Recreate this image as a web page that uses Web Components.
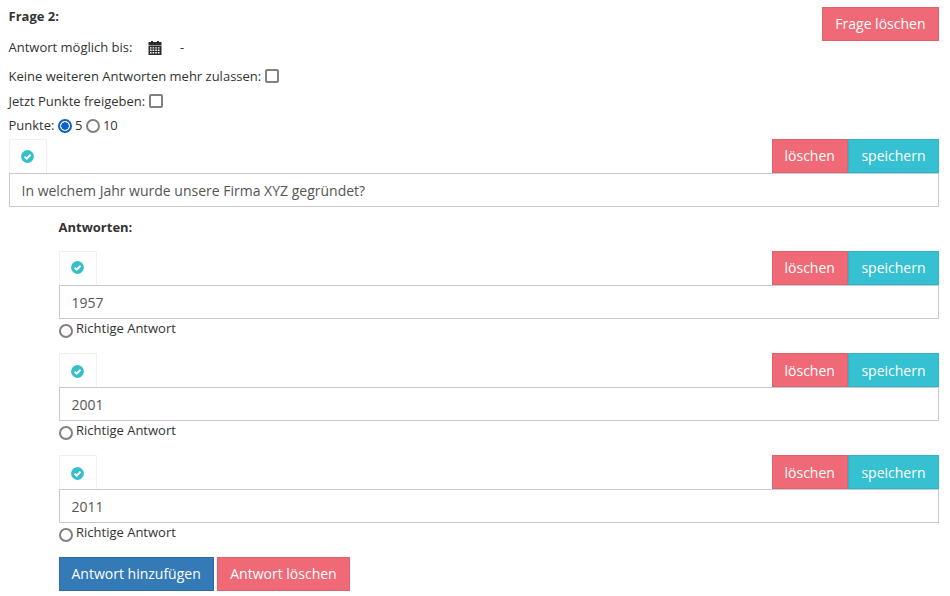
<!DOCTYPE html>
<html lang="de">
<head>
<meta charset="utf-8">
<title>Frage 2</title>
<style>
html, body { margin: 0; background: #fff; }
body { font: 13px/18px "Open Sans", sans-serif; color: #333; }
</style>
</head>
<body>
<quiz-question></quiz-question>
<script>
class QuizButton extends HTMLElement {
	constructor(){
		super();
		let shadowRoot = this.attachShadow({mode: 'open'});
		shadowRoot.innerHTML = `
			<style>
			:host { display: inline-block; }
			button {
				display: block;
				box-sizing: border-box;
				height: 34px;
				margin: 0;
				padding: var(--ink-shift, 0) 12px 0;
				border: 1px solid #e25f6b;
				border-radius: 0;
				background: #ef6a76;
				color: #fff;
				font: 14px/20px "Open Sans", sans-serif;
				white-space: nowrap;
			}
			:host([wide]) button { padding-left: 12.5px; padding-right: 12.5px; }
			:host([kind="save"]) button { background: #35c1d2; border-color: #2fb5c6; }
			:host([kind="primary"]) button { background: #337ab7; border-color: #2e6da4; }
			</style>
			<button type="button"><slot></slot></button>
		`;
	}
}
customElements.define('quiz-button', QuizButton);

class QuizEditor extends HTMLElement {
	constructor(){
		super();
		let shadowRoot = this.attachShadow({mode: 'open'});
		shadowRoot.innerHTML = `
			<style>
			:host { display: block; }
			.bar { display: flex; justify-content: space-between; height: 34px; }
			.tool {
				box-sizing: border-box;
				width: 38px;
				height: 34px;
				padding: var(--tool-pad, 10px) 1px 0 0;
				display: flex;
				align-items: flex-start;
				justify-content: center;
				border: 1px solid #f0f0f0;
				border-bottom: 0;
			}
			.actions { display: flex; }
			.field {
				box-sizing: border-box;
				height: 34px;
				padding: 0 12px;
				border: 1px solid #c7c9d3;
				font-size: 14px;
				line-height: 34px;
				color: #555;
			}
			svg { display: block; }
			</style>
			<div class="bar">
				<div class="tool">
					<svg width="13" height="13" viewBox="0 0 13 13">
						<circle cx="6.5" cy="6.5" r="6.4" fill="#35bfca"/>
						<path d="M3.5 6.6 5.7 8.7 9.6 4.8" fill="none" stroke="#fff" stroke-width="2"/>
					</svg>
				</div>
				<div class="actions">
					<quiz-button>löschen</quiz-button>
					<quiz-button kind="save" wide>speichern</quiz-button>
				</div>
			</div>
			<div class="field"><slot></slot></div>
		`;
	}
}
customElements.define('quiz-editor', QuizEditor);

class QuizCheck extends HTMLElement {
	constructor(){
		super();
		let shadowRoot = this.attachShadow({mode: 'open'});
		shadowRoot.innerHTML = `
			<style>
			:host { display: flex; align-items: center; height: 18px; gap: 3.5px; white-space: nowrap; }
			input {
				appearance: none;
				box-sizing: border-box;
				width: 14px;
				height: 14px;
				margin: 0;
				background: #fff;
				border: 2px solid #808080;
				border-radius: 2px;
			}
			</style>
			<span><slot></slot></span>
			<input type="checkbox">
		`;
	}
}
customElements.define('quiz-check', QuizCheck);

class QuizRadio extends HTMLElement {
	constructor(){
		super();
		let shadowRoot = this.attachShadow({mode: 'open'});
		shadowRoot.innerHTML = `
			<style>
			:host { display: inline-flex; align-items: center; gap: 3px; white-space: nowrap; }
			input {
				appearance: none;
				box-sizing: border-box;
				flex: none;
				width: 14px;
				height: 14px;
				margin: 2px 0 0 0.5px;
				background: #fff;
				border: 2px solid #808080;
				border-radius: 50%;
			}
			input:checked {
				border-color: #0f62c8;
				background: radial-gradient(circle, #0f62c8 0 3.5px, #fff 4px);
			}
			</style>
			<input type="radio">
			<span><slot></slot></span>
		`;
		if (this.hasAttribute('checked')) shadowRoot.querySelector('input').checked = true;
	}
}
customElements.define('quiz-radio', QuizRadio);

class QuizAnswer extends HTMLElement {
	constructor(){
		super();
		let shadowRoot = this.attachShadow({mode: 'open'});
		shadowRoot.innerHTML = `
			<style>
			:host { display: block; height: 102px; --tool-pad: 9px; }
			:host([low]) { --ink-shift: 2px; --tool-pad: 11px; }
			.right { display: flex; align-items: flex-start; gap: 3.5px; height: 18px; }
			.right input {
				appearance: none;
				box-sizing: border-box;
				width: 14px;
				height: 14px;
				margin: 5px 0 0 0;
				background: #fff;
				border: 2px solid #808080;
				border-radius: 50%;
			}
			</style>
			<quiz-editor><slot></slot></quiz-editor>
			<div class="right"><input type="radio"><span>Richtige Antwort</span></div>
		`;
	}
}
customElements.define('quiz-answer', QuizAnswer);

class QuizQuestion extends HTMLElement {
	constructor(){
		super();
		let shadowRoot = this.attachShadow({mode: 'open'});
		shadowRoot.innerHTML = `
			<style>
			:host { display: block; box-sizing: border-box; width: 939px; padding: 7px 0 0 8.5px; }
			.top { display: flex; justify-content: space-between; height: 34px; }
			b { font-weight: 700; }
			.until { display: flex; align-items: center; height: 18px; margin-top: -3px; }
			.until svg { margin: 2px 0 0 15.5px; }
			.until span { margin-left: 18px; }
			.no-more { margin-top: 11px; }
			.points-free { margin-top: 7px; }
			.points { display: flex; align-items: center; gap: 3px; height: 18px; margin-top: 6px; }
			.question { margin-top: 5px; }
			.answers { padding: 11px 0 0 50px; }
			.label { height: 18px; margin-bottom: 15px; }
			.buttons { display: flex; gap: 3px; }
			</style>
			<div class="top">
				<b>Frage 2:</b>
				<quiz-button wide>Frage löschen</quiz-button>
			</div>
			<div class="until">Antwort möglich bis:
				<svg width="14" height="14" viewBox="0 0 14 14" fill="#2b2b2b">
					<rect x="3" y="0" width="2" height="3"/>
					<rect x="9" y="0" width="2" height="3"/>
					<rect x="0.5" y="1" width="13" height="3.5"/>
					<path d="M0.5 5h13v9h-13zM2 6.2v1.4h1.6V6.2zm2.6 0v1.4h1.6V6.2zm2.7 0v1.4h1.6V6.2zm2.6 0v1.4h1.6V6.2zM2 8.6v1.4h1.6V8.6zm2.6 0v1.4h1.6V8.6zm2.7 0v1.4h1.6V8.6zm2.6 0v1.4h1.6V8.6zM2 11v1.4h1.6V11zm2.6 0v1.4h1.6V11zm2.7 0v1.4h1.6V11zm2.6 0v1.4h1.6V11z" fill-rule="evenodd"/>
				</svg>
				<span>-</span>
			</div>
			<quiz-check class="no-more">Keine weiteren Antworten mehr zulassen:</quiz-check>
			<quiz-check class="points-free">Jetzt Punkte freigeben:</quiz-check>
			<div class="points">Punkte: <quiz-radio checked>5</quiz-radio> <quiz-radio>10</quiz-radio></div>
			<quiz-editor class="question">In welchem Jahr wurde unsere Firma XYZ gegründet?</quiz-editor>
			<div class="answers">
				<div class="label"><b>Antworten:</b></div>
				<quiz-answer>1957</quiz-answer>
				<quiz-answer low>2001</quiz-answer>
				<quiz-answer low>2011</quiz-answer>
				<div class="buttons">
					<quiz-button kind="primary">Antwort hinzufügen</quiz-button>
					<quiz-button wide>Antwort löschen</quiz-button>
				</div>
			</div>
		`;
	}
}
customElements.define('quiz-question', QuizQuestion);
</script>
</body>
</html>
